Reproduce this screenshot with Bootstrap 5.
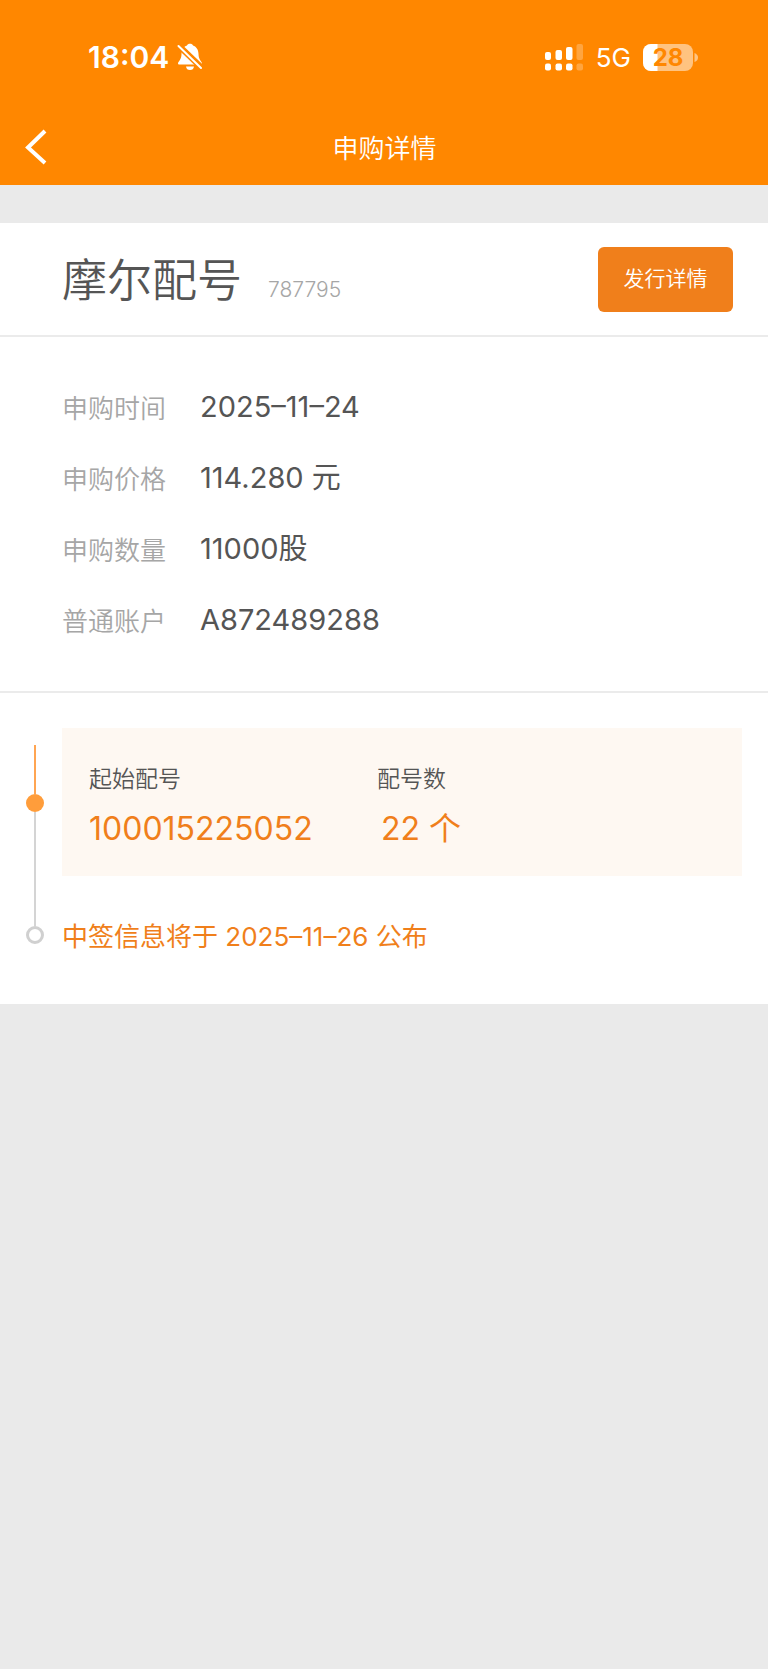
<!DOCTYPE html>
<html lang="zh-CN">
<head>
<meta charset="utf-8">
<meta name="viewport" content="width=device-width, initial-scale=1">
<title>申购详情</title>
<link href="https://cdn.jsdelivr.net/npm/bootstrap@5.3.0/dist/css/bootstrap.min.css" rel="stylesheet">
<style>
  body { background: #eaeaea; color: #555; font-family: Inter, "Noto Sans CJK SC", sans-serif; font-weight: 400; }
  .top-area { background: #ff8700; color: #fff; }
  .status-row { height: 110px; padding: 4px 70px 0 88px; }
  .clock { font-size: 30px; line-height: 36px; font-weight: 600; }
  .network { font-size: 26px; line-height: 32px; font-weight: 400; margin: 2px 12px 0 13px; }
  .title-row { height: 75px; padding: 0 23px 2px 24px; }
  .title-row h1 { font-size: 26px; line-height: 40px; }
  .side { width: 22px; }
  .cjk { font-family: "Noto Sans CJK SC", sans-serif; font-weight: 350; }
  .sheet { margin-top: 38px; background: #fff; }
  .rule { border-bottom: 2px solid #ebebeb; }
  .stock-row { height: 114px; padding: 0 35px 0 62px; }
  .stock-name { font-size: 45px; line-height: 64px; }
  .stock-id { gap: 26px; padding-bottom: 3px; }
  .stock-code { font-size: 21px; line-height: 28px; color: #a6a6a6; font-weight: 300; }
  .btn-issue { width: 135px; height: 65px; padding: 0 0 4px; font-size: 21px; line-height: 32px; border-radius: 6px; }
  .btn-issue, .btn-issue:hover { background: #f07f1b; color: #fff; }
  .facts { padding: 34px 62px 36px; }
  .fact { height: 71px; }
  .fact dt { width: 138px; font-size: 26px; line-height: 40px; color: #a6a6a6; }
  .fact dd { font-size: 29px; line-height: 40px; }
  .progress-area { padding: 35px 26px 47px 26px; gap: 18px; }
  .track { width: 18px; padding-top: 17px; }
  .seg { width: 2px; background: #d4d4d4; }
  .seg-done { height: 49px; background: #ffa552; }
  .node { width: 18px; height: 18px; border-radius: 50%; flex: none; }
  .node-done { background: #ff9d3b; }
  .node-next { border: 3px solid #d0d0d0; margin-bottom: 13px; }
  .allot { background: #fef8f2; height: 148px; padding: 31px 27px 0; }
  .allot-start { width: 46%; }
  .allot-label { font-size: 23px; line-height: 36px; }
  .allot-value { font-size: 32px; line-height: 48px; margin-top: 10px; }
  .accent { color: #f07f1b; }
  .notice { font-size: 26px; line-height: 40px; margin-top: 41px; }
</style>
</head>
<body>
<header class="top-area">
  <div class="status-row d-flex align-items-center justify-content-between">
    <div class="d-flex align-items-center gap-2">
      <span class="clock">18:04</span>
      <svg width="26" height="28" viewBox="0 0 26 28" aria-hidden="true">
        <path fill="#fff" d="M1 20.5C1 18.5 4.500 17 4.500 11C4.500 6.500 7 3.500 10 2.500C10.500 .3 15.500 .3 16 2.500C19 3.500 21.500 6.500 21.500 11C21.500 17 25 18.500 25 20.500Q25 21.500 24 21.500H2Q1 21.500 1 20.500ZM9 23.500H17Q16.500 27 13 27Q9.500 27 9 23.500Z"/>
        <path stroke="#ff8700" stroke-width="6" d="M0 1L25 25"/>
        <path stroke="#fff" stroke-width="2" stroke-linecap="round" d="M1.500 3L24 25"/>
      </svg>
    </div>
    <div class="d-flex align-items-center">
      <svg width="38" height="27" viewBox="0 0 38 27" fill="#fff" aria-hidden="true">
        <rect y="8" width="6" height="8" rx="2"/><rect x="10.500" y="6" width="6.500" height="10" rx="2"/><rect x="21" y="3" width="6.500" height="13" rx="2"/>
        <rect y="19.500" width="6" height="7" rx="2"/><rect x="10.500" y="19.500" width="6.500" height="7" rx="2"/><rect x="21" y="19.500" width="6.500" height="7" rx="2"/>
        <g opacity=".25"><rect x="31.500" width="6.500" height="16" rx="2"/><rect x="31.500" y="19.500" width="6.500" height="7" rx="2"/></g>
      </svg>
      <span class="network">5G</span>
      <svg width="55" height="27" viewBox="0 0 55 27" role="img" aria-label="28%">
        <clipPath id="cell"><rect width="50" height="27" rx="8"/></clipPath>
        <g clip-path="url(#cell)"><rect width="50" height="27" fill="#ffc380"/><rect width="14.500" height="27" fill="#fff"/></g>
        <path fill="#ffc380" d="M51.500 9Q55 10.500 55 13.500Q55 16.500 51.500 18Z"/>
        <text x="25" y="22" text-anchor="middle" font-size="24" font-weight="700" fill="#ff8700">28</text>
      </svg>
    </div>
  </div>
  <div class="title-row d-flex align-items-center justify-content-between">
    <a href="#" class="side d-flex" aria-label="返回">
      <svg class="flex-shrink-0" width="24" height="36" viewBox="0 0 24 36" fill="none" stroke="#fff" stroke-width="4"><path d="M21 2L4 18.500L21 34"/></svg>
    </a>
    <h1 class="cjk m-0">申购详情</h1>
    <span class="side"></span>
  </div>
</header>

<main class="sheet">
  <section class="stock-row rule d-flex align-items-center justify-content-between">
    <div class="stock-id d-flex align-items-baseline">
      <h2 class="stock-name cjk m-0">摩尔配号</h2>
      <span class="stock-code">787795</span>
    </div>
    <button type="button" class="btn btn-issue cjk">发行详情</button>
  </section>

  <dl class="facts rule m-0">
    <div class="fact d-flex align-items-center"><dt class="cjk">申购时间</dt><dd class="m-0">2025–11–24</dd></div>
    <div class="fact d-flex align-items-center"><dt class="cjk">申购价格</dt><dd class="m-0">114.280 元</dd></div>
    <div class="fact d-flex align-items-center"><dt class="cjk">申购数量</dt><dd class="m-0">11000股</dd></div>
    <div class="fact d-flex align-items-center"><dt class="cjk">普通账户</dt><dd class="m-0">A872489288</dd></div>
  </dl>

  <section class="progress-area d-flex">
    <div class="track d-flex flex-column align-items-center" aria-hidden="true">
      <div class="seg seg-done"></div>
      <div class="node node-done"></div>
      <div class="seg flex-grow-1"></div>
      <div class="node node-next"></div>
    </div>
    <div class="flex-grow-1">
      <div class="allot d-flex align-items-start">
        <div class="allot-start">
          <div class="allot-label cjk">起始配号</div>
          <div class="allot-value accent">100015225052</div>
        </div>
        <div>
          <div class="allot-label cjk">配号数</div>
          <div class="allot-value accent ps-1">22 个</div>
        </div>
      </div>
      <p class="notice accent mb-0">中签信息将于 2025–11–26 公布</p>
    </div>
  </section>
</main>
<script src="https://cdn.jsdelivr.net/npm/bootstrap@5.3.0/dist/js/bootstrap.bundle.min.js"></script>
</body>
</html>
